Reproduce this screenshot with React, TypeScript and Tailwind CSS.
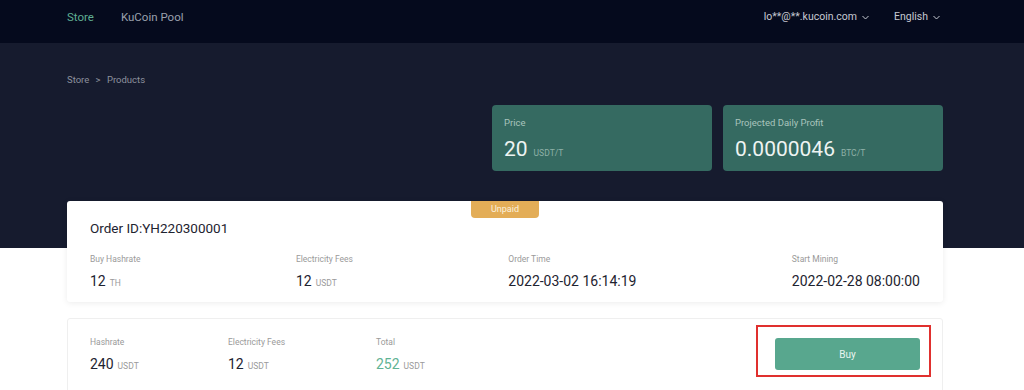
import React from "react";

const font = { fontFamily: "Roboto, 'Noto Sans', sans-serif" };

function Chevron() {
  return (
    <svg width="7" height="5" viewBox="0 0 7 5" className="ml-[5px]" fill="none">
      <path d="M0.5 1L3.5 4L6.5 1" stroke="currentColor" strokeWidth="1" />
    </svg>
  );
}

// top nav
function Header() {
  return (
    <header className="h-[43px] w-full bg-[#050a1d]">
      <div className="mx-auto flex h-full w-[876px] -translate-x-[7px] items-start justify-between pt-[10px] text-[11.5px] leading-[14px]">
        <nav className="flex items-center gap-[27px]">
          <span className="text-[#5fae92]">Store</span>
          <span className="text-[#9aa0ad]">KuCoin Pool</span>
        </nav>
        <div className="flex items-center gap-[25px] pr-[3px] text-[10.5px] text-[#c5c9d2]">
          <span className="flex items-center">
            lo**@**.kucoin.com
            <Chevron />
          </span>
          <span className="flex items-center">
            English
            <Chevron />
          </span>
        </div>
      </div>
    </header>
  );
}

function StatCard({ label, value, unit }: { label: string; value: string; unit: string }) {
  return (
    <div className="h-[66px] w-[220px] rounded-[4px] bg-[#356a61] px-[12px] pt-[11px]">
      <div className="text-[9.5px] leading-[14px] text-[#a9c4bd]">{label}</div>
      <div className="mt-[6px] flex items-baseline gap-[6px]">
        <span className="text-[21px] leading-[26px] text-[#eef4f2]">{value}</span>
        <span className="text-[8.5px] text-[#8fb1a8]">{unit}</span>
      </div>
    </div>
  );
}

function Field({
  label,
  value,
  unit,
  green,
}: {
  label: string;
  value: string;
  unit?: string;
  green?: boolean;
}) {
  return (
    <div>
      <div className="text-[8.5px] leading-[12px] text-[#9a9a9a]">{label}</div>
      <div className="mt-[8px] flex items-baseline gap-[4px]">
        <span className={`text-[14px] leading-[16px] ${green ? "text-[#5fb394]" : "text-[#1e2330]"}`}>
          {value}
        </span>
        {unit && <span className="text-[8.5px] text-[#9a9a9a]">{unit}</span>}
      </div>
    </div>
  );
}

export default function App() {
  return (
    <div className="h-[390px] w-full overflow-hidden bg-white" style={font}>
      <Header />

      <main className="w-full bg-[linear-gradient(to_bottom,#161b2e_205px,#ffffff_205px)]">
        <div className="mx-auto w-[876px] -translate-x-[7px]">
          {/* breadcrumb */}
          <div className="pt-[30px] text-[9.5px] leading-[14px] text-[#8d919d]">
            Store <span className="mx-[4px]">&gt;</span> Products
          </div>

          {/* stat cards */}
          <div className="mt-[18px] flex justify-end gap-[11px]">
            <StatCard label="Price" value="20" unit="USDT/T" />
            <StatCard label="Projected Daily Profit" value="0.0000046" unit="BTC/T" />
          </div>

          {/* order card */}
          <section className="relative mt-[30px] h-[101px] rounded-[3px] bg-white px-[23px] pt-[18px] shadow-[0_1px_6px_rgba(0,0,0,0.08)]">
            <div className="absolute left-[404px] top-0 flex h-[17px] w-[68px] items-center justify-center rounded-b-[4px] bg-[#e3ad57] text-[9px] text-[#fcf1de]">
              Unpaid
            </div>
            <div className="text-[13.5px] leading-[18px] text-[#1e2330]">Order ID:YH220300001</div>
            <div className="mt-[16px] flex justify-between">
              <Field label="Buy Hashrate" value="12" unit="TH" />
              <Field label="Electricity Fees" value="12" unit="USDT" />
              <Field label="Order Time" value="2022-03-02 16:14:19" />
              <Field label="Start Mining" value="2022-02-28 08:00:00" />
            </div>
          </section>

          {/* payment card */}
          <section className="relative mt-[16px] flex h-[90px] items-start rounded-[3px] border border-[#efefef] bg-white px-[22px] pt-[16px]">
            <div className="flex pt-[1px]">
              <div className="w-[138px]">
                <Field label="Hashrate" value="240" unit="USDT" />
              </div>
              <div className="w-[148px]">
                <Field label="Electricity Fees" value="12" unit="USDT" />
              </div>
              <Field label="Total" value="252" unit="USDT" green />
            </div>
            <div className="ml-auto mt-[3px]">
              <button className="h-[32px] w-[145px] rounded-[3px] bg-[#58a78e] text-[10px] text-[#eaf5f0]">
                Buy
              </button>
            </div>
            {/* highlight annotation */}
            <div className="pointer-events-none absolute left-[688px] top-[6px] h-[52px] w-[175px] border-2 border-[#e0302e]" />
          </section>
        </div>
      </main>
    </div>
  );
}
